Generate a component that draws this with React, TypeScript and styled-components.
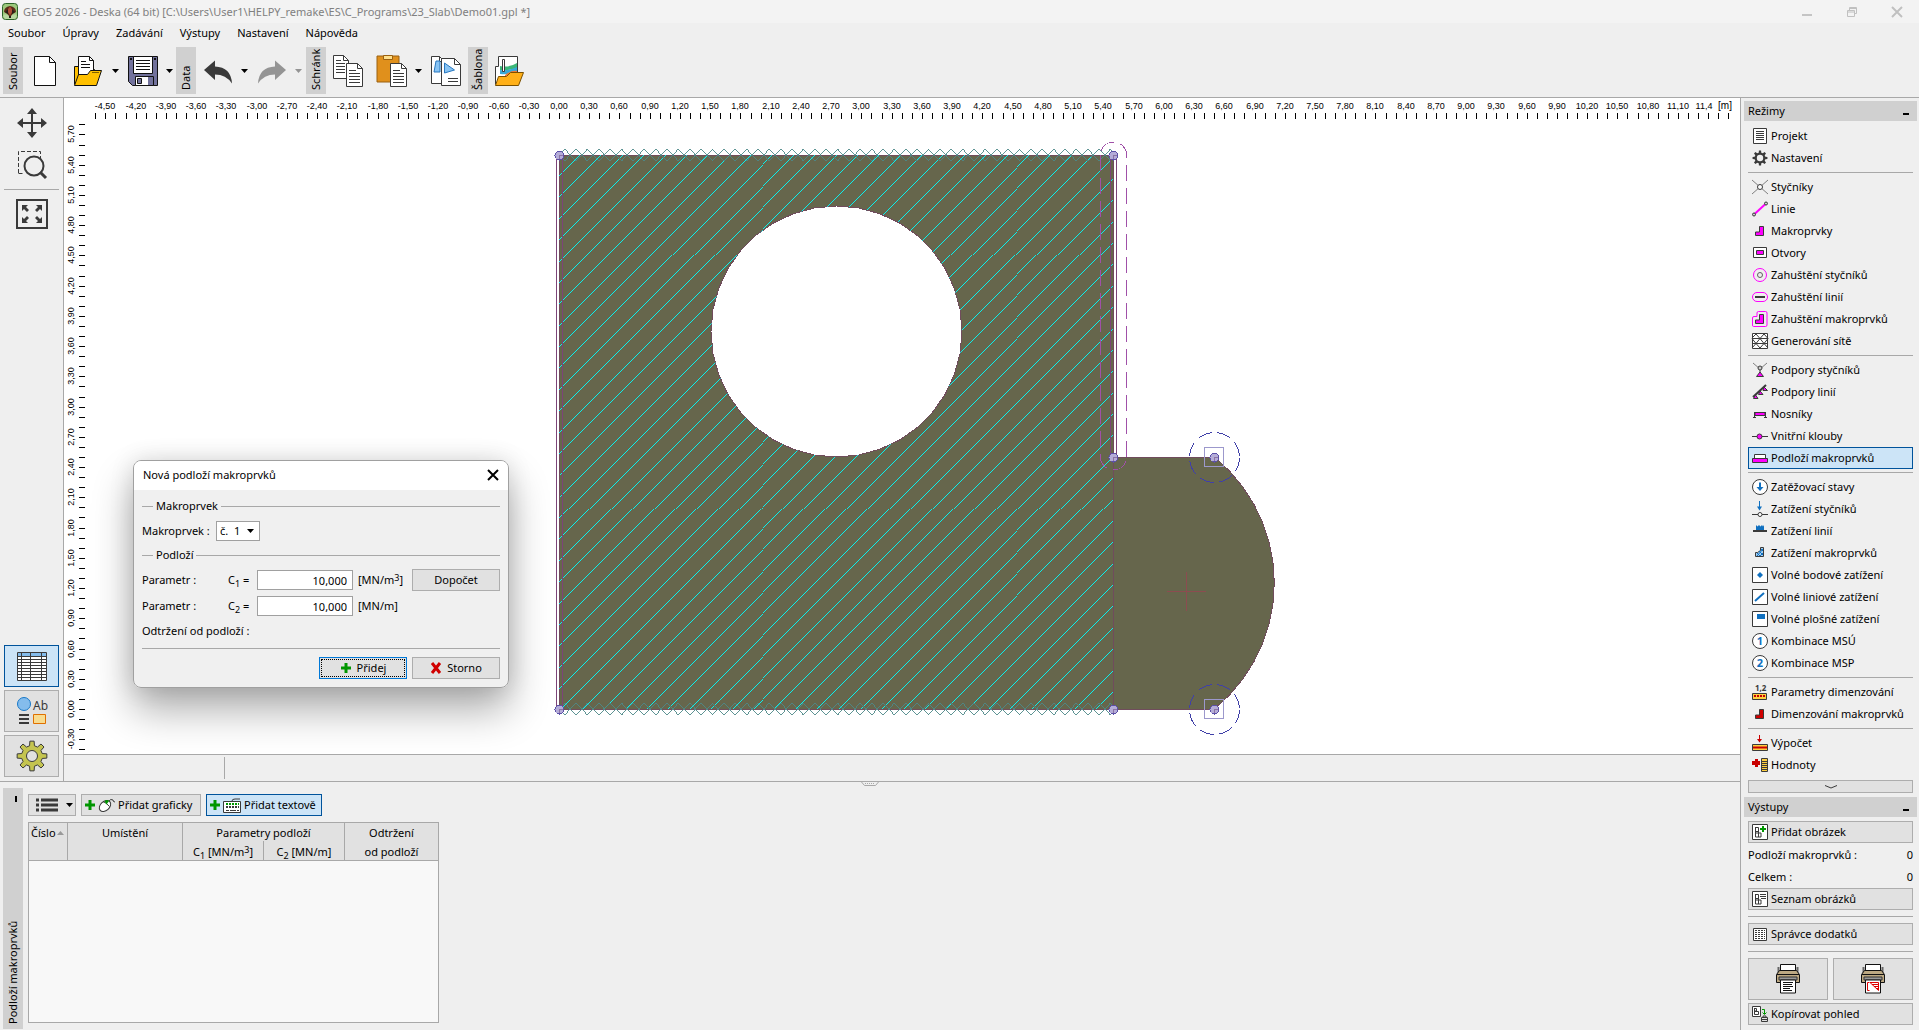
import React from 'react';
import styled, { createGlobalStyle, css } from 'styled-components';

const Global = createGlobalStyle`
  *, *::before, *::after { box-sizing: border-box; }
  html, body { margin: 0; height: 100%; overflow: hidden; }
  body, button, input, select, table {
    font-family: "Noto Sans", "Open Sans", sans-serif;
    font-size: 11px;
    line-height: 16px;
    color: #000;
  }
  button, input, select { margin: 0; padding: 0; border-radius: 0; }
  h2 { margin: 0; font-size: 11px; font-weight: 400; }
  svg { display: block; flex: none; }
  sub, sup { font-size: 9px; line-height: 0; }
  sup { vertical-align: 3px; }
`;

const LINE = '#a8a8a8';
const DARK = '#3a3a3a';
const PINK = '#ff00ff';
const BLUE = '#1070c0';

/* ---------- frame ---------- */
const Window = styled.div`
  display: flex;
  flex-direction: column;
  height: 100vh;
  background: #efefef;
`;
const TitleBar = styled.header`
  display: flex;
  align-items: center;
  height: 23px;
  padding: 0 0 0 2px;
  background: #f3f3f3;
  color: #808080;
`;
const TitleText = styled.span`
  flex: 1;
  padding-left: 5px;
  white-space: nowrap;
`;
const CaptionButton = styled.button`
  display: flex;
  align-items: center;
  justify-content: center;
  width: 45px;
  height: 23px;
  border: 0;
  background: none;
`;
const MenuBar = styled.nav`
  display: flex;
  gap: 17px;
  height: 22px;
  padding: 2px 8px;
`;
const MenuLink = styled.a`
  color: #000;
  text-decoration: none;
`;
const Toolbar = styled.div`
  display: flex;
  align-items: center;
  height: 53px;
  padding: 0 3px 1px;
  border-bottom: 1px solid ${LINE};
`;
const GroupHandle = styled.div<{ $gap?: number }>`
  display: flex;
  align-items: center;
  width: 20px;
  height: 47px;
  margin-left: ${(p) => p.$gap ?? 0}px;
  padding-top: 4px;
  background: #d0d0d0;
  writing-mode: vertical-rl;
  transform: rotate(180deg);
  white-space: nowrap;
  line-height: 20px;
`;
const ToolButton = styled.button`
  display: flex;
  align-items: center;
  justify-content: center;
  width: 44px;
  height: 44px;
  border: 0;
  background: none;
`;
const DropButton = styled.button`
  display: flex;
  align-items: center;
  justify-content: center;
  width: 10px;
  height: 44px;
  border: 0;
  background: none;
`;
const Main = styled.div`
  display: flex;
  flex: 1;
  min-height: 0;
`;
const Work = styled.div`
  display: flex;
  flex: 1;
  flex-direction: column;
  min-width: 0;
`;
const Upper = styled.div`
  display: flex;
  flex: 1;
  min-height: 0;
`;

/* ---------- left bar ---------- */
const LeftBar = styled.aside`
  display: flex;
  flex-direction: column;
  gap: 3px;
  width: 64px;
  padding: 5px 4px 4px;
  border-right: 1px solid ${LINE};
`;
const ViewButton = styled.button`
  display: flex;
  align-items: center;
  justify-content: center;
  height: 40px;
  border: 0;
  background: none;
`;
const Spacer = styled.div`
  flex: 1;
`;
const face = css<{ $active?: boolean }>`
  border: 1px solid ${(p) => (p.$active ? '#00539b' : '#adadad')};
  background: ${(p) => (p.$active ? '#cce4f7' : '#e1e1e1')};
`;
const SideButton = styled.button<{ $active?: boolean }>`
  display: flex;
  align-items: center;
  justify-content: center;
  height: 42px;
  ${face}
`;
const Rule = styled.hr<{ $space?: number }>`
  width: 100%;
  height: 1px;
  margin: ${(p) => p.$space ?? 3}px 0;
  border: 0;
  background: ${LINE};
`;

/* ---------- canvas ---------- */
const CanvasColumn = styled.div`
  display: flex;
  flex: 1;
  flex-direction: column;
  min-width: 0;
`;
const Canvas = styled.main`
  position: relative;
  flex: 1;
  min-height: 0;
  overflow: hidden;
  background: #fff;
`;
const Drawing = styled.svg`
  width: 100%;
  height: 100%;
`;
const StatusBar = styled.div`
  display: flex;
  height: 27px;
  padding: 2px 0;
  border-top: 1px solid ${LINE};
`;
const StatusCell = styled.div`
  width: 161px;
  border-right: 1px solid ${LINE};
`;

/* ---------- dialog ---------- */
const DialogFrame = styled.div`
  position: absolute;
  left: 69px;
  top: 362px;
  width: 376px;
  border-radius: 8px;
  box-shadow: 0 22px 40px rgba(0, 0, 0, 0.32), 0 0 24px rgba(0, 0, 0, 0.12);
`;
const Dialog = styled.form`
  border: 1px solid #a0a0a0;
  border-radius: 8px;
  overflow: hidden;
  background: #f0f0f0;
`;
const DialogTitle = styled.div`
  display: flex;
  align-items: center;
  justify-content: space-between;
  height: 29px;
  padding: 0 4px 1px 9px;
  background: #fff;
`;
const CloseButton = styled.button`
  display: flex;
  align-items: center;
  justify-content: center;
  width: 22px;
  height: 22px;
  border: 0;
  background: none;
`;
const DialogBody = styled.div`
  padding: 8px 8px;
`;
const Legend = styled.div`
  display: flex;
  align-items: center;
  gap: 3px;
  height: 16px;
  &::before { content: ''; width: 11px; height: 1px; background: ${LINE}; }
  &::after { content: ''; flex: 1; height: 1px; background: ${LINE}; }
`;
const FormRow = styled.div<{ $height?: number }>`
  display: flex;
  align-items: center;
  height: ${(p) => p.$height ?? 26}px;
`;
const SelectRow = styled(FormRow)`
  gap: 5px;
`;
const FormGrid = styled.div`
  padding-top: 4px;
`;
const Caption = styled.label`
  width: 86px;
`;
const MacroCaption = styled.label`
  width: 69px;
`;
const Symbol = styled.label`
  width: 29px;
`;
const NumberInput = styled.input`
  width: 96px;
  height: 20px;
  padding: 0 5px;
  border: 1px solid #a0a0a0;
  background: #fff;
  text-align: right;
`;
const Unit = styled.span`
  width: 59px;
  padding-left: 5px;
  white-space: nowrap;
`;
const SelectWrap = styled.span`
  position: relative;
  display: inline-flex;
  & > svg { position: absolute; right: 5px; top: 8px; pointer-events: none; }
`;
const Select = styled.select`
  width: 44px;
  height: 20px;
  padding: 0 14px 0 3px;
  border: 1px solid #a0a0a0;
  background: #fff;
  appearance: none;
`;
const DialogRule = styled.hr`
  height: 1px;
  margin: 5px 0 8px;
  border: 0;
  background: ${LINE};
`;
const PushButton = styled.button<{ $default?: boolean }>`
  display: flex;
  align-items: center;
  justify-content: center;
  gap: 5px;
  width: 88px;
  height: 22px;
  border: 1px solid ${(p) => (p.$default ? '#0078d7' : '#adadad')};
  background: #e1e1e1;
  outline: ${(p) => (p.$default ? '1px dotted #000' : 'none')};
  outline-offset: -3px;
`;
const ButtonRow = styled.div`
  display: flex;
  justify-content: flex-end;
  gap: 5px;
`;

/* ---------- bottom ---------- */
const Bottom = styled.section`
  position: relative;
  display: flex;
  gap: 5px;
  height: 249px;
  padding: 6px 3px 1px;
  border-top: 1px solid ${LINE};
`;
const Grip = styled.svg`
  position: absolute;
  top: -1px;
  left: calc(50% - 9px);
`;
const BottomHandle = styled.div`
  display: flex;
  justify-content: space-between;
  width: 20px;
  padding: 5px 0 5px;
  background: #d0d0d0;
  writing-mode: vertical-rl;
  transform: rotate(180deg);
  line-height: 20px;
`;
const HandleMark = styled.i`
  width: 2px;
  height: 6px;
  margin: 3px 12px 3px 6px;
  background: #000;
`;
const BottomBody = styled.div`
  display: flex;
  flex-direction: column;
  align-items: flex-start;
  gap: 6px;
  padding: 6px 0 6px;
`;
const ActionRow = styled.div`
  display: flex;
  gap: 5px;
`;
const Action = styled.button<{ $active?: boolean; $width: number }>`
  display: flex;
  align-items: center;
  gap: 2px;
  width: ${(p) => p.$width}px;
  height: 22px;
  padding: 0 2px;
  white-space: nowrap;
  ${face}
`;
const ListAction = styled(Action)`
  gap: 7px;
  padding: 0 2px 0 7px;
`;
const TableBox = styled.div`
  flex: 1;
  border: 1px solid ${LINE};
  background: #f8f8f8;
`;
const Table = styled.table`
  width: 409px;
  table-layout: fixed;
  border-collapse: separate;
  border-spacing: 0;
  background: #e1e1e1;
`;
const Col = styled.col<{ $width: number }>`
  width: ${(p) => p.$width}px;
`;
const Th = styled.th<{ $top?: boolean; $low?: boolean; $last?: boolean }>`
  height: ${(p) => (p.$low ? 20 : 18)}px;
  padding: ${(p) => (p.$low ? 3 : 2)}px 0 0;
  border-right: ${(p) => (p.$last ? 'none' : `1px solid ${LINE}`)};
  border-bottom: ${(p) => (p.$top ? 'none' : `1px solid ${LINE}`)};
  font-weight: 400;
  line-height: 16px;
  vertical-align: top;
  white-space: nowrap;
`;
const SortHead = styled.span`
  display: flex;
  align-items: center;
  padding-left: 2px;
  gap: 1px;
`;

/* ---------- right panel ---------- */
const RightPanel = styled.aside`
  width: 179px;
  padding: 3px 2px 0 3px;
  border-left: 1px solid ${LINE};
`;
const PanelHead = styled.div`
  display: flex;
  align-items: center;
  justify-content: space-between;
  height: 20px;
  padding: 0 8px 0 4px;
  background: #d0d0d0;
`;
const Collapse = styled.button`
  width: 6px;
  height: 2px;
  margin-top: 6px;
  border: 0;
  background: #000;
`;
const PanelBody = styled.div`
  padding: 4px;
`;
const ModeButton = styled.button<{ $active?: boolean }>`
  display: flex;
  align-items: center;
  gap: 3px;
  width: 100%;
  height: 22px;
  padding: 0 3px;
  border: 1px solid ${(p) => (p.$active ? '#00539b' : 'transparent')};
  background: ${(p) => (p.$active ? '#cce4f7' : 'transparent')};
  text-align: left;
  white-space: nowrap;
`;
const OutputButton = styled(ModeButton)`
  border-color: #adadad;
  background: #e1e1e1;
`;
const MoreButton = styled.button`
  display: flex;
  align-items: center;
  justify-content: center;
  width: 100%;
  height: 13px;
  margin-top: 4px;
  ${face}
`;
const Counts = styled.div`
  padding-top: 1px;
`;
const CountRow = styled.div`
  display: flex;
  align-items: center;
  justify-content: space-between;
  height: 22px;
`;
const PrintRow = styled.div`
  display: grid;
  grid-template-columns: 1fr 1fr;
  gap: 5px;
  margin-bottom: 3px;
`;
const SmallIcon = styled.svg`
  overflow: visible;
`;

/* ---------- icons ---------- */
const Arrow = ({ color = '#000' }: { color?: string }) => (
  <svg width="8" height="4" viewBox="0 0 8 4"><path d="M0 0h7L3.5 4z" fill={color} /></svg>
);
const I32 = ({ children }: { children: React.ReactNode }) => (
  <svg width="32" height="32" viewBox="0 0 32 32" fill="none">{children}</svg>
);
const I16 = ({ children }: { children: React.ReactNode }) => (
  <SmallIcon width="16" height="16" viewBox="0 0 16 16" fill="none">{children}</SmallIcon>
);
const Plus = () => (
  <svg width="12" height="12" viewBox="0 0 12 12"><path d="M4.5 1h3v3.5H11v3H7.5V11h-3V7.5H1v-3h3.5z" fill="#009600" /></svg>
);

const AppIcon = () => (
  <svg width="16" height="17" viewBox="0 0 16 17">
    <rect x="0.5" y="0.5" width="15" height="16" rx="3" fill="#9cc87c" stroke="#2c6428" />
    <path d="M1.500 11.500h13V13q0 3-3 3h-7q-3 0-3-3z" fill="#b8d8a0" />
    <path d="M2 9q0-5 6-6 6 1 6 6-3 1-6 5-3-4-6-5z" fill="#5c2c18" />
    <path d="M5 7.500l3-4 3 4-3 5z" fill="#b05038" />
    <path d="M3 9l3-3v5zM13 9l-3-3v5z" fill="#282018" />
    <path d="M7 13h2v2H7z" fill="#282018" />
  </svg>
);
const Sheet = ({ x, y, w = 15, h = 22 }: { x: number; y: number; w?: number; h?: number }) => (
  <g stroke={DARK}>
    <path d={`M${x} ${y}h${w - 5}l5 5v${h - 5}h-${w}z`} fill="#fff" />
    <path d={`M${x + w - 5} ${y}v5h5`} />
  </g>
);
const Lines = ({ x, y, n, w }: { x: number; y: number; n: number; w: number }) => (
  <path
    d={Array.from({ length: n }, (_, i) => `M${x} ${y + i * 3}h${i === 0 ? w - 4 : w}`).join('')}
    stroke={DARK}
  />
);
const NewIcon = () => (
  <I32><path d="M5.5 1.5h15l6 6v23h-21z" fill="#fff" stroke="#111" /><path d="M20.5 1.5v6h6" stroke="#111" /></I32>
);
const OpenIcon = () => (
  <I32>
    <path d="M1.5 29.5V11.5h5l2 3h13v5" fill="#ffc000" stroke="#111" />
    <path d="M5.5 21V1.5h11l4 4V21z" fill="#fff" stroke="#111" />
    <path d="M16.5 1.500v4h4M8 6.500h5M8 9.500h9M8 12.500h9" stroke="#111" />
    <path d="M1.500 30.500l4-11h9l3-4h11l-5 15z" fill="#ffc000" stroke="#111" />
    <path d="M19 17.500h7" stroke="#806000" />
  </I32>
);
const SaveIcon = () => (
  <I32>
    <path d="M1.5 1.5h29v29H5.500l-4-4z" fill="#72729c" stroke="#111" />
    <path d="M6.500 1.500h19v17h-19z" fill="#fff" stroke="#111" />
    <path d="M9 5.500h14M9 8.500h14M9 11.500h14M9 14.500h14" stroke="#111" />
    <path d="M3 4h2M27 4h2" stroke="#111" strokeWidth="2" />
    <path d="M8.500 21.500h18v9h-18z" fill="#fff" stroke="#111" />
    <path d="M10.500 23.500h4v5h-4z" fill="#72729c" stroke="#111" />
    <path d="M21 22h5v8h-5z" fill="#72729c" />
  </I32>
);
const UndoIcon = ({ redo }: { redo?: boolean }) => (
  <I32>
    <path
      transform={redo ? 'translate(32 0) scale(-1 1)' : undefined}
      d="M2 15L13 5.500v6Q29 12 30 28.500 24 19.500 13 19.500v5.500z"
      fill={redo ? '#949494' : DARK}
    />
  </I32>
);
const CopyIcon = () => (
  <I32>
    <Sheet x={1.5} y={0.5} w={15} h={23} /><Lines x={4} y={5.5} n={5} w={9} />
    <Sheet x={14.500} y={8.500} w={16} h={23} /><Lines x={17} y={15.500} n={5} w={11} />
  </I32>
);
const PasteIcon = () => (
  <I32>
    <path d="M1 1h22v26H1z" fill="#e0901c" stroke="#9a6010" />
    <path d="M7.500 0.500h9v4h-9z" fill="#ffe08c" stroke="#9a6010" />
    <Sheet x={14.500} y={8.500} w={16} h={23} /><Lines x={17} y={15.500} n={5} w={11} />
  </I32>
);
const PictureIcon = () => (
  <I32>
    <Sheet x={1.500} y={1.500} w={13} h={27} />
    <path d="M4 17l2-11h4v11z" fill="#88c4f4" stroke="#2878c0" />
    <path d="M11.500 3.500h13l6 6v21h-19z" fill="#fff" stroke={DARK} />
    <path d="M24.500 3.500v6h6" stroke={DARK} />
    <path d="M14.500 18V8l10 7z" fill="#88c4f4" stroke="#2878c0" />
    <path d="M18 23.500h10M18 26.500h10" stroke={DARK} />
  </I32>
);
const TemplateIcon = () => (
  <I32>
    <path d="M1.500 29.500V11.500h3v-10h19v20" fill="#fff" stroke={DARK} />
    <path d="M6 11q9 2 17-3v5q-8 3-17 2z" fill="#3cb878" />
    <path d="M6 15q9 1 17-3v5q-8 3-17 2z" fill="#38a8d8" />
    <path d="M11 20q6-5 12-4v5H11z" fill="#f07830" />
    <path d="M8.500 4.500h2v12h-2z" fill="#fff" stroke={DARK} />
    <path d="M1.500 30.500l3-9h8l4-4h13l-5 13z" fill="#ffb018" stroke="#7a5000" />
  </I32>
);
const MoveIcon = () => (
  <I32>
    <path d="M16 5v22M5 16h22" stroke={DARK} strokeWidth="2" />
    <path d="M16 1l5 6H11zM16 31l-5-6h10zM1 16l6-5v10zM31 16l-6 5V11z" fill={DARK} />
  </I32>
);
const ZoomIcon = () => (
  <I32>
    <path d="M2.500 23V1.500h22v7M2.500 23.500h6" stroke={DARK} strokeDasharray="4 2" />
    <circle cx="18" cy="16" r="9.500" stroke={DARK} strokeWidth="2" />
    <path d="M24 22l6 6" stroke={DARK} strokeWidth="3" />
  </I32>
);
const FitIcon = () => (
  <I32>
    <path d="M1 3h30v28H1z" stroke={DARK} strokeWidth="2" />
    <path d="M6 8h6l-2 2 3 3-2 2-3-3-2 2zM26 8v6l-2-2-3 3-2-2 3-3-2-2zM6 26v-6l2 2 3-3 2 2-3 3 2 2zM26 26h-6l2-2-3-3 2-2 3 3 2-2z" fill={DARK} />
  </I32>
);
const TableIcon = () => (
  <I32>
    <path d="M1.500 2.500h29v28h-29z" fill="#fff" />
    <path d="M2 3h28v3H2z" fill="#84bcec" />
    <path d="M1.500 2.500h29v28h-29zM1 6.500h30M1 9.500h30M1 12.500h30M1 15.500h30M1 18.500h30M1 21.500h30M1 24.500h30M1 27.500h30M5.500 2v28M14.500 2v28M25.500 2v28" stroke={DARK} />
  </I32>
);
const StyleIcon = () => (
  <I32>
    <circle cx="8" cy="9" r="6.500" fill="#84bcec" stroke="#1878c8" />
    <text x="17" y="15" fontSize="12" fill={DARK}>Ab</text>
    <path d="M3 20h10M3 24h10M3 28h10" stroke={DARK} strokeWidth="2" />
    <path d="M17.500 19.500h12v9h-12z" fill="#f8dc90" stroke="#e07000" />
  </I32>
);
const gearPath = (cx: number, cy: number, ro: number, ri: number, n: number) => {
  const pts: string[] = [];
  for (let i = 0; i < n; i++) {
    const a = (i / n) * Math.PI * 2;
    const s = (Math.PI * 2) / n;
    [[-0.3, ri], [-0.18, ro], [0.18, ro], [0.3, ri]].forEach(([k, r]) => {
      const t = a + k * s;
      pts.push(`${(cx + Math.cos(t) * r).toFixed(2)} ${(cy + Math.sin(t) * r).toFixed(2)}`);
    });
  }
  return `M${pts.join('L')}z`;
};
const GearIcon = () => (
  <I32>
    <path d={gearPath(16, 16, 15, 10.500, 8)} fill="#c4c450" stroke={DARK} />
    <circle cx="16" cy="16" r="5.500" fill="#e1e1e1" stroke={DARK} />
  </I32>
);
const LShape = ({ fill }: { fill: string }) => (
  <path d="M7.500 3.500h4v9h-8V9h4z" fill={fill} stroke={DARK} />
);
const Box = () => <path d="M0.500 0.500h15v15H0.500z" fill="#fff" stroke={DARK} />;
const Digit = ({ n }: { n: string }) => (
  <>
    <circle cx="8" cy="8" r="7.500" fill="#fff" stroke={DARK} />
    <text x="8" y="12" fontSize="11" fontWeight="700" textAnchor="middle" fill={BLUE}>{n}</text>
  </>
);
const modeIcons: Record<string, React.ReactNode> = {
  project: <><path d="M1.500 0.500h13v15h-13z" fill="#fff" stroke={DARK} /><path d="M4 3.500h8M4 5.500h8M4 7.500h8M4 9.500h8M4 11.500h8" stroke={DARK} /></>,
  gear: <><path d={gearPath(8, 8, 7.500, 5.500, 8)} fill={DARK} /><circle cx="8" cy="8" r="3.200" fill="#efefef" /></>,
  node: <><path d="M0 1l16 14M16 1L0 15" stroke="#808080" /><circle cx="8" cy="8" r="2.500" fill="#fff" stroke={DARK} /></>,
  line: <><path d="M2 13.500L14 2.500" stroke={PINK} strokeWidth="2" /><circle cx="2" cy="13.500" r="1.500" fill="#ccc" stroke={DARK} /><circle cx="14" cy="2.500" r="1.500" fill="#ccc" stroke={DARK} /></>,
  macro: <LShape fill={PINK} />,
  hole: <><path d="M1.500 2.500h13v10h-13z" fill="#fff" stroke={DARK} /><path d="M4.500 5.500h7v4h-7z" fill={PINK} stroke={DARK} /></>,
  nodeDense: <><circle cx="8" cy="8" r="6.500" stroke={PINK} /><circle cx="8" cy="8" r="2.500" stroke="#606060" /></>,
  lineDense: <><rect x="0.500" y="3.500" width="15" height="9" rx="4.500" stroke={PINK} /><path d="M3 8h10" stroke={DARK} strokeWidth="2" /></>,
  macroDense: <><path d="M6.500 0.500h7q1.500 0 1.500 1.500v12q0 1.500-1.500 1.500h-12Q.5 15.500.5 14V7q0-1.500 1.500-1.500h3V2q0-1.500 1.500-1.500z" stroke={PINK} /><LShape fill={PINK} /></>,
  mesh: <><path d="M0.500 0.500h15v15H0.500z" fill="#fff" stroke={DARK} /><path d="M0 5.500h16M0 10.500h16M0 5L4 1l4 4.500L12 1l4 4.500M0 5.500l4 5 4-5 4 5 4-5M0 15l4-4.500L8 15l4-4.500 4 4.500" stroke={DARK} /></>,
  nodeSupport: <><path d="M1 1l7 6 7-6" stroke="#808080" /><circle cx="8" cy="6" r="2" fill="#ccc" stroke={DARK} /><path d="M8 8v4" stroke={DARK} /><path d="M8 10l3.500 4.500h-7z" fill={PINK} stroke={DARK} /></>,
  lineSupport: <><path d="M1 13L14 1" stroke={DARK} strokeWidth="2" /><path d="M3.500 11l2.500 3.500H1.500zM8 7l3 3.500H6.500zM12 3l3.500 3.500H11z" fill={PINK} stroke={DARK} /></>,
  beam: <><path d="M3 6.500h10v3H3z" fill={PINK} stroke={DARK} /><path d="M2.500 6v6M13.500 6v6M1 11.500h3M12 11.500h3" stroke={DARK} /></>,
  hinge: <><path d="M0 8.500h16" stroke={DARK} /><circle cx="7.500" cy="8.500" r="2.500" fill={PINK} stroke={DARK} /></>,
  soil: <><path d="M2.500 4.500h11v4h-11z" fill="#fff" stroke={DARK} /><path d="M0.500 8.500h15v4H0.500z" fill={PINK} stroke={DARK} /></>,
  loadCase: <><circle cx="8" cy="8" r="7.500" fill="#fff" stroke={DARK} /><path d="M8 3.500v6" stroke={BLUE} strokeWidth="2" /><path d="M4.500 8h7L8 12z" fill={BLUE} /></>,
  nodeLoad: <><path d="M0 13.500h16" stroke={DARK} /><circle cx="8" cy="13.500" r="2" fill="#fff" stroke={DARK} /><path d="M7.500 0v6" stroke={BLUE} /><path d="M5 5.500h5L7.500 9.500z" fill={BLUE} /></>,
  lineLoad: <><path d="M1 8h14" stroke={DARK} strokeWidth="2" /><path d="M4 7V2l1.500 1.500L7 2l1.500 1.500L10 2l1 1.500 1-1.500v5z" fill={BLUE} /></>,
  macroLoad: <><path d="M8.500 2.500h3v9h-8v-4h2l3-2z" fill="#a8d0f0" stroke={DARK} /><path d="M5 8l3 3M7 6l4 4M9 4l2 2M5 11l6-7M8 11l3-3" stroke={BLUE} /></>,
  point: <><Box /><path d="M8 5l3 3-3 3-3-3z" fill={BLUE} /></>,
  freeLine: <><Box /><path d="M3 12L12 4" stroke={BLUE} strokeWidth="2" /></>,
  area: <><Box /><path d="M5 3h8v5H5z" fill={BLUE} /></>,
  one: <Digit n="1" />,
  two: <Digit n="2" />,
  design: <><text x="3" y="7" fontSize="8" fontWeight="700" fill={DARK}>1,2</text><path d="M0.500 9.500h14v6h-14z" fill="#ffd040" stroke={DARK} /><path d="M2 12h12" stroke="#c80000" strokeWidth="2" strokeDasharray="2 1" /></>,
  macroDesign: <LShape fill="#d00000" />,
  calc: <><path d="M0.500 9.500h15v6H0.500z" fill="#ffd040" stroke={DARK} /><path d="M1 12.500h14" stroke="#c80000" strokeWidth="2" /><path d="M7.500 0v5" stroke="#c80000" /><path d="M5 4h5L7.500 7.500z" fill="#c80000" /></>,
  values: <><path d="M3 2h3v2h2v4H6v2H3V8H0V4h3z" fill="#c80000" /><path d="M9.500 1.500h6v13h-6z" fill="#ffd040" stroke={DARK} /><path d="M10 4.500h5M10 6.500h5M10 8.500h5M10 10.500h5M10 12.500h5" stroke={DARK} /></>,
  addImage: <><Box /><path d="M3.500 3v10h5.500v-4H3.500M3.500 7.500h3V3.500h-3M6.500 7v6" stroke={DARK} /><path d="M10 2h2v2h2v2h-2v2h-2V6H8V4h2z" fill="#009600" /></>,
  imageList: <><Box /><path d="M3.500 3v10h5.500v-4H3.500M3.500 7.500h3V3.500h-3M6.500 7v6M8 3.500h6M8 5.500h6M9 7.500h5" stroke={DARK} /></>,
  addendum: <><path d="M1.500 2.500h13v12h-13z" fill="#fff" stroke={DARK} /><path d="M3 4.500h10M3 6.500h10M3 8.500h10M3 10.500h10M3 12.500h10" stroke={DARK} strokeDasharray="2 1" /></>,
  copyView: <><path d="M0.500 0.500h8v10h-8z" fill="#fff" stroke={DARK} /><path d="M2.500 2v6.500h4V5.500h-4M2.500 5h2V2.500h-2" stroke={DARK} /><path d="M10 3.500h2.500V8M10.500 6.500l2 2 2-2" stroke="#009600" /><path d="M9.500 11.500h6v4h-6zM11 11v-1h3v1M9 13.500h7" stroke={DARK} /></>,
};
const MouseIcon = () => (
  <svg width="18" height="16" viewBox="0 0 18 16" fill="none">
    <path d="M10 5q3-4 5-2 0 2 2 2" stroke={DARK} />
    <ellipse cx="7" cy="9" rx="6.500" ry="4.500" transform="rotate(-42 7 9)" fill="#fff" stroke={DARK} />
    <path d="M5 4.500q3 1 6.500 5" stroke={DARK} />
    <path d="M6.500 4q2.500-2 4.500 0l-2.500 3.500z" fill="#009600" />
  </svg>
);
const KeyboardIcon = () => (
  <svg width="19" height="15" viewBox="0 0 19 15" fill="none">
    <path d="M9 3q0-2 3-2h5" stroke={DARK} />
    <path d="M0.500 3.500h17v11H.5z" fill="#fff" stroke={DARK} />
    <path d="M3 6h13" stroke="#009600" strokeWidth="2" strokeDasharray="2 1" />
    <path d="M3 9h13" stroke={DARK} strokeWidth="2" strokeDasharray="2 1" />
    <path d="M3 12.500h3M7 12.500h6M14 12.500h2" stroke={DARK} strokeWidth="1" />
  </svg>
);
const PrinterIcon = ({ red }: { red?: boolean }) => (
  <svg width="26" height="30" viewBox="0 0 26 30" fill="none">
    <path d="M3.500 3v8M22.500 3v8" stroke="#666" strokeWidth="2" />
    <path d="M5.500 8V.5h15V8z" fill="#fff" stroke="#111" />
    <path d="M4.500 6.500h17l3 4v8h-23v-8z" fill="#bca882" stroke="#111" />
    <path d="M2 10.500h22" stroke="#111" />
    <path d="M4 13h18v3H4z" fill="#999" stroke="#333" />
    <path d="M5.500 16v13h15V16z" fill="#fff" stroke="#111" />
    {red
      ? <path d="M9.500 18.500h-2v8h2M10 18.500h8.500v8zM12 20.500h6M14 22.500h4M16 24.500h2" stroke="#e00000" />
      : <path d="M8 18.500h10M8 20.500h9M8 22.500h10M8 24.500h7M8 26.500h9" stroke="#111" />}
  </svg>
);

/* ---------- model drawing ---------- */
const SCALE = 100.8;
const X0 = 495;
const Y0 = 611;
const px = (m: number) => X0 + m * SCALE;
const py = (m: number) => Y0 - m * SCALE;
const TOP = 57;
const RIGHT = 1049;
const MID = 359;
const fmt = (m: number) => m.toFixed(2).replace('.', ',');

const Ruler = () => {
  const xs = Array.from({ length: 163 }, (_, i) => i - 46);
  const ys = Array.from({ length: 63 }, (_, i) => i - 4);
  return (
    <g shapeRendering="crispEdges">
      {xs.map((i) => <path key={i} d={`M${Math.round(px(i / 10))}.5 15v6`} stroke="#000" />)}
      {ys.map((i) => <path key={i} d={`M15 ${Math.round(py(i / 10))}.5h6`} stroke="#000" />)}
      <g fontFamily='"Liberation Sans", Arial, sans-serif' fontSize="9" textAnchor="middle">
        {xs.filter((i) => i % 3 === 0 && i < 114).map((i) => (
          <text key={i} x={Math.round(px(i / 10))} y="11">{fmt(i / 10)}</text>
        ))}
        <text x="1640" y="11">11,4</text>
        <text x="1661" y="11" fontSize="10">[m]</text>
        {ys.filter((i) => i % 3 === 0).map((i) => (
          <text key={i} transform={`translate(10 ${Math.round(py(i / 10))}) rotate(-90)`}>{fmt(i / 10)}</text>
        ))}
      </g>
    </g>
  );
};
const zigzag = (y: number) => {
  const step = 11.37;
  let up = `M${X0} ${y}`;
  let down = up;
  for (let x = X0; x < RIGHT - 4; x += step) {
    up += `L${x + step / 2} ${y - 6}L${x + step} ${y}`;
    down += `L${x + step / 2} ${y + 6}L${x + step} ${y}`;
  }
  return up + down;
};
const ring = (cx: number, cy: number, r: number, from: number, to: number, n: number) =>
  Array.from({ length: n + 1 }, (_, i) => {
    const a = ((from + ((to - from) * i) / n) * Math.PI) / 180;
    return `${(cx + Math.cos(a) * r).toFixed(1)} ${(cy + Math.sin(a) * r).toFixed(1)}`;
  }).join('L');
const SLAB = `M${X0} ${TOP}H${RIGHT}V${Y0}H${X0}z`;
const HOLE = `M${ring(772.500, 233.500, 125.500, 0, 360, 36)}z`;
const WING = `M${RIGHT} ${MID}L${ring(1048, 485, 162.300, -50.900, 50.900, 14)}L${RIGHT} ${Y0}z`;
const HATCH = Array.from({ length: 54 }, (_, i) => {
  const s = Math.round(572 + (i - 1) * 21.38) + 0.5;
  return `M${s - TOP} ${TOP}L${s - Y0} ${Y0}`;
}).join('');
const joints: [number, number, boolean][] = [
  [X0, TOP, false], [RIGHT, TOP, false], [RIGHT, MID, false],
  [X0, Y0, false], [RIGHT, Y0, false], [1150, MID, true], [1150, Y0, true],
];
const Model = () => (
  <g fill="none" shapeRendering="crispEdges">
    <clipPath id="slab"><path d={SLAB + HOLE} clipRule="evenodd" /></clipPath>
    <path d={WING} fill="#66664c" stroke="#704c5c" />
    <path d={SLAB + HOLE} fill="#66664c" fillRule="evenodd" stroke="#704c5c" />
    <path d={HATCH} stroke="#00ffff" strokeWidth="0.9" clipPath="url(#slab)" />
    <path d={zigzag(TOP) + zigzag(Y0)} stroke="#4c8888" strokeWidth="0.9" />
    <path d={`M${X0 - 2.500} ${TOP}V${Y0}M${X0 + 3.500} ${TOP}V${Y0}M${RIGHT - 2.500} ${TOP}V${MID}M${RIGHT + 3.500} ${TOP}V${MID}`} stroke="#7c4478" />
    <path d={`M${RIGHT - 12.500} ${TOP}V${MID}a13 13 0 0 0 26 0M${RIGHT + 13.500} ${MID}V${TOP}a13 13 0 0 0 -26 0`} stroke="#a050a8" strokeDasharray="16 7" />
    <path d="M1103 493.500h39M1122.500 474v39" stroke="#8c4c50" />
    {joints.map(([x, y, fixed]) => (
      <g key={`${x}-${y}`}>
        <circle cx={x + 0.500} cy={y + 0.500} r="4.500" fill="#b4acd8" stroke="#5c50a8" />
        <path d={`M${x} ${y + 0.500}h4M${x + 0.500} ${y}v4`} stroke="#8c74a4" />
        {fixed && <path d={`M${x - 9.500} ${y - 9.500}h19v19h-19z`} stroke="#9c98cc" />}
        {fixed && <circle cx={x + 0.500} cy={y + 0.500} r="25" stroke="#4040a8" strokeDasharray="14 6" />}
      </g>
    ))}
  </g>
);

/* ---------- content ---------- */
const menus = ['Soubor', 'Úpravy', 'Zadávání', 'Výstupy', 'Nastavení', 'Nápověda'];
const modes: [string, string][][] = [
  [['project', 'Projekt'], ['gear', 'Nastavení']],
  [
    ['node', 'Styčníky'], ['line', 'Linie'], ['macro', 'Makroprvky'], ['hole', 'Otvory'],
    ['nodeDense', 'Zahuštění styčníků'], ['lineDense', 'Zahuštění linií'],
    ['macroDense', 'Zahuštění makroprvků'], ['mesh', 'Generování sítě'],
  ],
  [
    ['nodeSupport', 'Podpory styčníků'], ['lineSupport', 'Podpory linií'], ['beam', 'Nosníky'],
    ['hinge', 'Vnitřní klouby'], ['soil', 'Podloží makroprvků'],
  ],
  [
    ['loadCase', 'Zatěžovací stavy'], ['nodeLoad', 'Zatížení styčníků'], ['lineLoad', 'Zatížení linií'],
    ['macroLoad', 'Zatížení makroprvků'], ['point', 'Volné bodové zatížení'],
    ['freeLine', 'Volné liniové zatížení'], ['area', 'Volné plošné zatížení'],
    ['one', 'Kombinace MSÚ'], ['two', 'Kombinace MSP'],
  ],
  [['design', 'Parametry dimenzování'], ['macroDesign', 'Dimenzování makroprvků']],
  [['calc', 'Výpočet'], ['values', 'Hodnoty']],
];

const SoilDialog = () => (
  <DialogFrame>
    <Dialog onSubmit={(e) => e.preventDefault()}>
      <DialogTitle>
        <h2>Nová podloží makroprvků</h2>
        <CloseButton type="button" aria-label="Zavřít">
          <svg width="12" height="12" viewBox="0 0 12 12"><path d="M1 1l10 10M11 1L1 11" stroke="#000" strokeWidth="2" /></svg>
        </CloseButton>
      </DialogTitle>
      <DialogBody>
        <Legend>Makroprvek</Legend>
        <SelectRow $height={33}>
          <MacroCaption htmlFor="macro">Makroprvek :</MacroCaption>
          <SelectWrap>
            <Select id="macro"><option>č.&nbsp; 1</option></Select>
            <Arrow />
          </SelectWrap>
        </SelectRow>
        <Legend>Podloží</Legend>
        <FormGrid>
          <FormRow>
            <Caption htmlFor="c1">Parametr :</Caption>
            <Symbol htmlFor="c1">C<sub>1</sub> =</Symbol>
            <NumberInput id="c1" defaultValue="10,000" />
            <Unit>[MN/m<sup>3</sup>]</Unit>
            <PushButton type="button">Dopočet</PushButton>
          </FormRow>
          <FormRow>
            <Caption htmlFor="c2">Parametr :</Caption>
            <Symbol htmlFor="c2">C<sub>2</sub> =</Symbol>
            <NumberInput id="c2" defaultValue="10,000" />
            <Unit>[MN/m]</Unit>
          </FormRow>
          <FormRow $height={24}>Odtržení od podloží :</FormRow>
        </FormGrid>
        <DialogRule />
        <ButtonRow>
          <PushButton type="submit" $default><Plus />Přidej</PushButton>
          <PushButton type="button">
            <svg width="12" height="12" viewBox="0 0 12 12"><path d="M2 1l8 10M10 1L2 11" stroke="#d00000" strokeWidth="3" /></svg>
            Storno
          </PushButton>
        </ButtonRow>
      </DialogBody>
    </Dialog>
  </DialogFrame>
);

export default function App() {
  return (
    <Window>
      <Global />
      <TitleBar>
        <AppIcon />
        <TitleText>GEO5 2026 - Deska (64 bit) [C:\Users\User1\HELPY_remake\ES\C_Programs\23_Slab\Demo01.gpl *]</TitleText>
        <CaptionButton aria-label="Minimalizovat">
          <svg width="10" height="10" viewBox="0 0 10 10"><path d="M0 8h10" stroke="#c4c4c4" strokeWidth="2" /></svg>
        </CaptionButton>
        <CaptionButton aria-label="Obnovit">
          <svg width="10" height="10" viewBox="0 0 10 10" fill="none"><path d="M.5 3.500h7v6h-7zM.5 5h7M2.500 3V.5h7v6H8M2.500 1.500h7" stroke="#c0c0c0" /></svg>
        </CaptionButton>
        <CaptionButton aria-label="Zavřít">
          <svg width="12" height="12" viewBox="0 0 12 12"><path d="M1 1l10 10M11 1L1 11" stroke="#c0c0c0" strokeWidth="2" /></svg>
        </CaptionButton>
      </TitleBar>
      <MenuBar>{menus.map((m) => <MenuLink key={m} href="#">{m}</MenuLink>)}</MenuBar>
      <Toolbar>
        <GroupHandle>Soubor</GroupHandle>
        <ToolButton aria-label="Nový"><NewIcon /></ToolButton>
        <ToolButton aria-label="Otevřít"><OpenIcon /></ToolButton>
        <DropButton aria-label="Poslední soubory"><Arrow /></DropButton>
        <ToolButton aria-label="Uložit"><SaveIcon /></ToolButton>
        <DropButton aria-label="Možnosti uložení"><Arrow /></DropButton>
        <GroupHandle $gap={1}>Data</GroupHandle>
        <ToolButton aria-label="Zpět"><UndoIcon /></ToolButton>
        <DropButton aria-label="Historie zpět"><Arrow /></DropButton>
        <ToolButton aria-label="Znovu"><UndoIcon redo /></ToolButton>
        <DropButton aria-label="Historie znovu"><Arrow color="#949494" /></DropButton>
        <GroupHandle $gap={2}>Schránk</GroupHandle>
        <ToolButton aria-label="Kopírovat"><CopyIcon /></ToolButton>
        <ToolButton aria-label="Vložit"><PasteIcon /></ToolButton>
        <DropButton aria-label="Možnosti vložení"><Arrow /></DropButton>
        <ToolButton aria-label="Kopírovat obrázek"><PictureIcon /></ToolButton>
        <GroupHandle>Šablona</GroupHandle>
        <ToolButton aria-label="Šablona"><TemplateIcon /></ToolButton>
      </Toolbar>
      <Main>
        <Work>
          <Upper>
            <LeftBar>
              <ViewButton aria-label="Posun"><MoveIcon /></ViewButton>
              <ViewButton aria-label="Lupa"><ZoomIcon /></ViewButton>
              <Rule $space={0} />
              <ViewButton aria-label="Zobrazit vše"><FitIcon /></ViewButton>
              <Spacer />
              <SideButton $active aria-label="Tabulka"><TableIcon /></SideButton>
              <SideButton aria-label="Styl kreslení"><StyleIcon /></SideButton>
              <SideButton aria-label="Nastavení"><GearIcon /></SideButton>
            </LeftBar>
            <CanvasColumn>
              <Canvas>
                <Drawing>
                  <Ruler />
                  <Model />
                </Drawing>
                <SoilDialog />
              </Canvas>
              <StatusBar><StatusCell /></StatusBar>
            </CanvasColumn>
          </Upper>
          <Bottom>
            <Grip width="18" height="5" viewBox="0 0 18 5" fill="none">
              <path d="M0.500 1l3 3.500h11l3-3.500" stroke={LINE} />
              <path d="M4 2.500h10" stroke={LINE} strokeDasharray="1 1" />
            </Grip>
            <BottomHandle><span>Podloží makroprvků</span><HandleMark /></BottomHandle>
            <BottomBody>
              <ActionRow>
                <ListAction $width={48} aria-label="Zobrazení seznamu">
                  <svg width="23" height="14" viewBox="0 0 23 14"><path d="M0 2h3M5 2h17M0 7h3M5 7h17M0 12h3M5 12h17" stroke={DARK} strokeWidth="3" /></svg>
                  <Arrow />
                </ListAction>
                <Action $width={120}><Plus /><MouseIcon />Přidat graficky</Action>
                <Action $width={116} $active><Plus /><KeyboardIcon />Přidat textově</Action>
              </ActionRow>
              <TableBox>
                <Table>
                  <colgroup>
                    <Col $width={39} /><Col $width={115} /><Col $width={81} /><Col $width={81} /><Col $width={93} />
                  </colgroup>
                  <thead>
                    <tr>
                      <Th rowSpan={2}>
                        <SortHead>Číslo<svg width="7" height="4" viewBox="0 0 7 4"><path d="M0 4h7L3.500 0z" fill="#999" /></svg></SortHead>
                      </Th>
                      <Th rowSpan={2}>Umístění</Th>
                      <Th colSpan={2} $top>Parametry podloží</Th>
                      <Th $top $last>Odtržení</Th>
                    </tr>
                    <tr>
                      <Th $low>C<sub>1</sub> [MN/m<sup>3</sup>]</Th>
                      <Th $low>C<sub>2</sub> [MN/m]</Th>
                      <Th $low $last>od podloží</Th>
                    </tr>
                  </thead>
                  <tbody />
                </Table>
              </TableBox>
            </BottomBody>
          </Bottom>
        </Work>
        <RightPanel>
          <PanelHead><h2>Režimy</h2><Collapse aria-label="Sbalit režimy" /></PanelHead>
          <PanelBody>
            {modes.map((group, g) => (
              <React.Fragment key={g}>
                {g > 0 && <Rule />}
                {group.map(([icon, label]) => (
                  <ModeButton key={label} $active={icon === 'soil'}><I16>{modeIcons[icon]}</I16>{label}</ModeButton>
                ))}
              </React.Fragment>
            ))}
            <MoreButton aria-label="Více">
              <svg width="12" height="4" viewBox="0 0 12 4"><path d="M0 .5l6 2.500 6-2.500" stroke={DARK} fill="none" /></svg>
            </MoreButton>
          </PanelBody>
          <PanelHead><h2>Výstupy</h2><Collapse aria-label="Sbalit výstupy" /></PanelHead>
          <PanelBody>
            <OutputButton><I16>{modeIcons.addImage}</I16>Přidat obrázek</OutputButton>
            <Counts>
              <CountRow><span>Podloží makroprvků :</span><span>0</span></CountRow>
              <CountRow><span>Celkem :</span><span>0</span></CountRow>
            </Counts>
            <OutputButton><I16>{modeIcons.imageList}</I16>Seznam obrázků</OutputButton>
            <Rule $space={6} />
            <OutputButton><I16>{modeIcons.addendum}</I16>Správce dodatků</OutputButton>
            <Rule $space={6} />
            <PrintRow>
              <SideButton aria-label="Tisk protokolu"><PrinterIcon /></SideButton>
              <SideButton aria-label="Tisk pohledu"><PrinterIcon red /></SideButton>
            </PrintRow>
            <OutputButton><I16>{modeIcons.copyView}</I16>Kopírovat pohled</OutputButton>
          </PanelBody>
        </RightPanel>
      </Main>
    </Window>
  );
}
